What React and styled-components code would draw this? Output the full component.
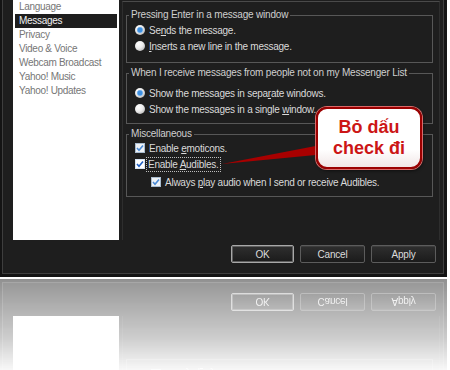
import React from "react";
import styled, { createGlobalStyle } from "styled-components";

const GlobalStyle = createGlobalStyle`
  html, body {
    margin: 0;
    padding: 0;
    background: #fff;
  }
  body {
    font-family: "Liberation Sans", Arial, sans-serif;
  }
`;

const categories = [
  "Language",
  "Messages",
  "Privacy",
  "Video & Voice",
  "Webcam Broadcast",
  "Yahoo! Music",
  "Yahoo! Updates",
];

const DialogBody = () => (
  <Dialog>
    <Frame>
      <Main>
        <ListBox>
          {categories.map((c) => (
            <ListItem key={c} $selected={c === "Messages"}>
              {c}
            </ListItem>
          ))}
        </ListBox>
        <Content>
          <Group $pt={1} $pb={8}>
            <Legend>Pressing Enter in a message window</Legend>
            <Row>
              <Radio $checked />
              <span>
                Se<u>n</u>ds the message.
              </span>
            </Row>
            <Row>
              <Radio />
              <span>
                <u>I</u>nserts a new line in the message.
              </span>
            </Row>
          </Group>
          <Group $pt={6} $pb={6}>
            <Legend>When I receive messages from people not on my Messenger List</Legend>
            <Row>
              <Radio $checked />
              <span>
                Show the messages in sepa<u>r</u>ate windows.
              </span>
            </Row>
            <Row>
              <Radio />
              <span>
                Show the messages in a single <u>w</u>indow.
              </span>
            </Row>
          </Group>
          <Group $pt={0} $pb={6}>
            <Legend>Miscellaneous</Legend>
            <Row>
              <CheckBox>
                <CheckMark />
              </CheckBox>
              <span>
                Enable <u>e</u>moticons.
              </span>
            </Row>
            <Row>
              <CheckBox $focused>
                <CheckMark />
              </CheckBox>
              <Focused>
                Enable <u>A</u>udibles.
              </Focused>
            </Row>
            <Row $indent={16} $top={2}>
              <CheckBox>
                <CheckMark />
              </CheckBox>
              <span>
                Always <u>p</u>lay audio when I send or receive Audibles.
              </span>
            </Row>
          </Group>
        </Content>
      </Main>
      <ButtonRow>
        <Button $default $w={63}>OK</Button>
        <Button $w={65}>Cancel</Button>
        <Button $w={65}>Apply</Button>
      </ButtonRow>
    </Frame>
  </Dialog>
);

const CheckMark = () => (
  <svg width="8" height="8" viewBox="0 0 8 8">
    <path d="M1 4 L3 6.2 L7 1.5" fill="none" stroke="currentColor" strokeWidth="1.6" />
  </svg>
);

const App = () => (
  <Page>
    <GlobalStyle />
    <DialogBody />
    <Tail width="450" height="277" viewBox="0 0 450 277">
      <polygon points="222,164 326,144 326,154" fill="#a80000" />
    </Tail>
    <Callout>
      Bỏ dấu
      <br />
      check đi
    </Callout>
    <Reflection aria-hidden="true">
      <Flipped>
        <DialogBody />
      </Flipped>
    </Reflection>
  </Page>
);

export default App;

const Page = styled.div`
  position: relative;
  width: 450px;
  height: 370px;
  overflow: hidden;
  background: #fff;
`;

const Dialog = styled.div`
  width: 447px;
  height: 277px;
  box-sizing: border-box;
  padding: 0 3px 3px 2px;
  background: #141414;
`;

const Frame = styled.div`
  height: 100%;
  box-sizing: border-box;
  border: 1px solid #3e3e3e;
  border-top: none;
  background: #1e1e1e;
  display: flex;
  flex-direction: column;
`;

const Main = styled.div`
  display: flex;
  height: 240px;
`;

const ListBox = styled.div`
  width: 106px;
  margin-left: 10px;
  background: #fff;
  padding: 0 2px;
  box-sizing: border-box;
`;

const ListItem = styled.div`
  height: 14px;
  line-height: 14px;
  padding-left: 4px;
  font-size: 10px;
  letter-spacing: -0.3px;
  color: ${(p) => (p.$selected ? "#f2f2f2" : "#767676")};
  background: ${(p) => (p.$selected ? "#1e1e1e" : "transparent")};
  white-space: nowrap;
`;

const Content = styled.div`
  flex: 1;
  margin: 1px 3px 0 3px;
  border-top: 1px solid #4a4a4a;
  border-left: 1px solid #2e2e2e;
  border-right: 1px solid #2e2e2e;
  padding: 7px 6px 0 3px;
`;

const Group = styled.fieldset`
  margin: 0;
  min-width: 0;
  border: 1px solid #575757;
  padding: ${(p) => p.$pt}px 8px ${(p) => p.$pb}px 8px;

  & + & {
    margin-top: 4px;
  }
`;

const Legend = styled.legend`
  padding: 0 2px;
  margin-left: -6px;
  font-size: 10px;
  letter-spacing: -0.2px;
  line-height: 12px;
  color: #cfcfcf;
  white-space: nowrap;
`;

const Row = styled.div`
  display: flex;
  align-items: center;
  gap: 4px;
  height: 16px;
  margin-top: ${(p) => p.$top || 0}px;
  padding-left: ${(p) => p.$indent || 0}px;
  font-size: 10px;
  letter-spacing: -0.25px;
  color: #dadada;
  white-space: nowrap;

  u {
    text-decoration: underline;
    text-underline-offset: 1px;
  }
`;

const Radio = styled.span`
  width: 10px;
  height: 10px;
  border-radius: 50%;
  flex: none;
  background: ${(p) =>
    p.$checked
      ? "radial-gradient(circle at 50% 50%, #3d8fe0 0, #3d8fe0 2px, #9cc7f0 3px, transparent 3.5px), radial-gradient(circle at 35% 30%, #ffffff 0, #e6e6e6 45%, #9c9c9c 100%)"
      : "radial-gradient(circle at 35% 30%, #ffffff 0, #ececec 45%, #a0a0a0 100%)"};
`;

const CheckBox = styled.span`
  width: 10px;
  height: 10px;
  box-sizing: border-box;
  flex: none;
  display: flex;
  align-items: center;
  justify-content: center;
  border: 1px solid ${(p) => (p.$focused ? "#d8e4f2" : "#a9bccf")};
  background: ${(p) => (p.$focused ? "#ffffff" : "#eef2f6")};
  color: ${(p) => (p.$focused ? "#1f5fc4" : "#4a8ad6")};
`;

const Focused = styled.span`
  outline: 1px dotted #bdbdbd;
  outline-offset: 0;
  padding: 0 1px;
  margin-left: -2px;
  line-height: 13px;
`;

const ButtonRow = styled.div`
  display: flex;
  justify-content: flex-end;
  gap: 6px;
  margin-top: 5px;
  padding-right: 7px;
`;

const Button = styled.button`
  width: ${(p) => p.$w}px;
  height: 18px;
  box-sizing: border-box;
  padding: 0;
  border-radius: 2px;
  border: 1px solid ${(p) => (p.$default ? "#a8a8a8" : "#5c5c5c")};
  box-shadow: ${(p) => (p.$default ? "inset 0 0 0 1px #5e5e5e" : "inset 0 1px 0 #3c3c3c")};
  background: linear-gradient(#2f2f2f, #1b1b1b);
  color: #dcdcdc;
  font-family: "Liberation Sans", Arial, sans-serif;
  font-size: 10px;
  letter-spacing: -0.2px;
`;

const Tail = styled.svg`
  position: absolute;
  left: 0;
  top: 0;
  pointer-events: none;
`;

const Callout = styled.div`
  position: absolute;
  left: 316px;
  top: 107px;
  width: 106px;
  height: 62px;
  box-sizing: border-box;
  border: 2px solid #9c0000;
  border-radius: 11px;
  background: linear-gradient(#ffffff 70%, #f1e6e6);
  box-shadow: 0 0 0 1px #d86a6a, 1px 2px 3px rgba(0, 0, 0, 0.5);
  display: flex;
  align-items: center;
  justify-content: center;
  text-align: center;
  font-family: "Liberation Sans", Arial, sans-serif;
  font-weight: bold;
  font-size: 18px;
  line-height: 21px;
  color: #cc1616;
`;

const Reflection = styled.div`
  margin-top: 2px;
  height: 91px;
  overflow: hidden;
  -webkit-mask-image: linear-gradient(rgba(0, 0, 0, 0.47), rgba(0, 0, 0, 0.22) 65%, rgba(0, 0, 0, 0.03) 100%);
  mask-image: linear-gradient(rgba(0, 0, 0, 0.47), rgba(0, 0, 0, 0.22) 65%, rgba(0, 0, 0, 0.03) 100%);
`;

const Flipped = styled.div`
  transform: scaleY(-1);
`;
